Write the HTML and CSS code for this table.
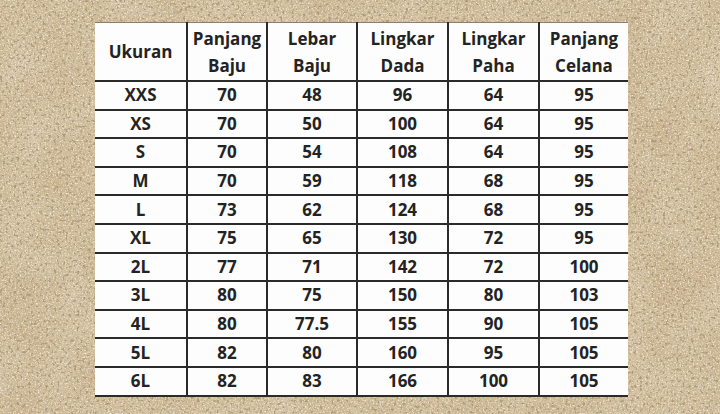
FILE: index.html
```html
<!DOCTYPE html>
<html lang="id">
<head>
<meta charset="utf-8">
<title>Ukuran</title>
<link rel="stylesheet" href="styles.css">
</head>
<body>
<div class="page">
  <table class="size-table">
    <colgroup>
      <col class="c1"><col class="c2"><col class="c3"><col class="c4"><col class="c5"><col class="c6">
    </colgroup>
    <thead>
      <tr>
        <th>Ukuran</th>
        <th>Panjang<br>Baju</th>
        <th>Lebar<br>Baju</th>
        <th>Lingkar<br>Dada</th>
        <th>Lingkar<br>Paha</th>
        <th>Panjang<br>Celana</th>
      </tr>
    </thead>
    <tbody>
      <tr><td>XXS</td><td>70</td><td>48</td><td>96</td><td>64</td><td>95</td></tr>
      <tr><td>XS</td><td>70</td><td>50</td><td>100</td><td>64</td><td>95</td></tr>
      <tr><td>S</td><td>70</td><td>54</td><td>108</td><td>64</td><td>95</td></tr>
      <tr><td>M</td><td>70</td><td>59</td><td>118</td><td>68</td><td>95</td></tr>
      <tr><td>L</td><td>73</td><td>62</td><td>124</td><td>68</td><td>95</td></tr>
      <tr><td>XL</td><td>75</td><td>65</td><td>130</td><td>72</td><td>95</td></tr>
      <tr><td>2L</td><td>77</td><td>71</td><td>142</td><td>72</td><td>100</td></tr>
      <tr><td>3L</td><td>80</td><td>75</td><td>150</td><td>80</td><td>103</td></tr>
      <tr><td>4L</td><td>80</td><td>77.5</td><td>155</td><td>90</td><td>105</td></tr>
      <tr><td>5L</td><td>82</td><td>80</td><td>160</td><td>95</td><td>105</td></tr>
      <tr><td>6L</td><td>82</td><td>83</td><td>166</td><td>100</td><td>105</td></tr>
    </tbody>
  </table>
</div>
</body>
</html>
```

FILE: styles.css
```css
html, body {
  margin: 0;
  padding: 0;
}
body {
  width: 720px;
  height: 414px;
  overflow: hidden;
  background-color: #c9b28c;
  background-image:
    url("data:image/svg+xml;utf8,<svg xmlns='http://www.w3.org/2000/svg' width='720' height='414'><filter id='d'><feTurbulence type='fractalNoise' baseFrequency='0.35' numOctaves='2' seed='11'/><feColorMatrix values='0 0 0 0 0.42  0 0 0 0 0.33  0 0 0 0 0.2  0 0 0 7 -4.1'/></filter><rect width='100%' height='100%' filter='url(%23d)'/></svg>"),
    url("data:image/svg+xml;utf8,<svg xmlns='http://www.w3.org/2000/svg' width='720' height='414'><filter id='n'><feTurbulence type='fractalNoise' baseFrequency='0.7' numOctaves='3' seed='7'/><feColorMatrix values='0 0 0 0 0.55  0 0 0 0 0.45  0 0 0 0 0.3  0 0 0 2.2 -0.95'/></filter><rect width='100%' height='100%' filter='url(%23n)'/></svg>"),
    url("data:image/svg+xml;utf8,<svg xmlns='http://www.w3.org/2000/svg' width='720' height='414'><filter id='l'><feTurbulence type='fractalNoise' baseFrequency='0.6' numOctaves='2' seed='21'/><feColorMatrix values='0 0 0 0 0.93  0 0 0 0 0.86  0 0 0 0 0.74  0 0 0 2.4 -1.05'/></filter><rect width='100%' height='100%' filter='url(%23l)'/></svg>"),
    url("data:image/svg+xml;utf8,<svg xmlns='http://www.w3.org/2000/svg' width='720' height='414'><filter id='m'><feTurbulence type='fractalNoise' baseFrequency='0.02' numOctaves='2' seed='3'/><feColorMatrix values='0 0 0 0 0.95  0 0 0 0 0.9  0 0 0 0 0.8  0 0 0 0.5 -0.15'/></filter><rect width='100%' height='100%' filter='url(%23m)'/></svg>");
  font-family: "Open Sans", "Liberation Sans", sans-serif;
}
.page {
  padding: 22px 0 0 95px;
}
.size-table {
  border-collapse: collapse;
  background: #fdfdfd;
  table-layout: fixed;
  width: 533px;
  color: #232323;
  font-size: 17px;
  font-weight: 700;
  text-align: center;
  border-top: 1px solid #8a8070;
  border-bottom: 2px solid #2a2a2a;
}
.c1 { width: 92px; }
.c2 { width: 80px; }
.c3 { width: 90px; }
.c4 { width: 91px; }
.c5 { width: 91px; }
.c6 { width: 89px; }
.size-table th,
.size-table td {
  padding: 0;
  border-left: 2px solid #2a2a2a;
  border-top: 2px solid #2a2a2a;
}
.size-table tr > :first-child {
  border-left: none;
}
.size-table thead th {
  border-top: none;
  height: 57px;
  line-height: 27px;
  font-weight: 700;
}
.size-table td {
  height: 26.6px;
  line-height: 26px;
}
```
